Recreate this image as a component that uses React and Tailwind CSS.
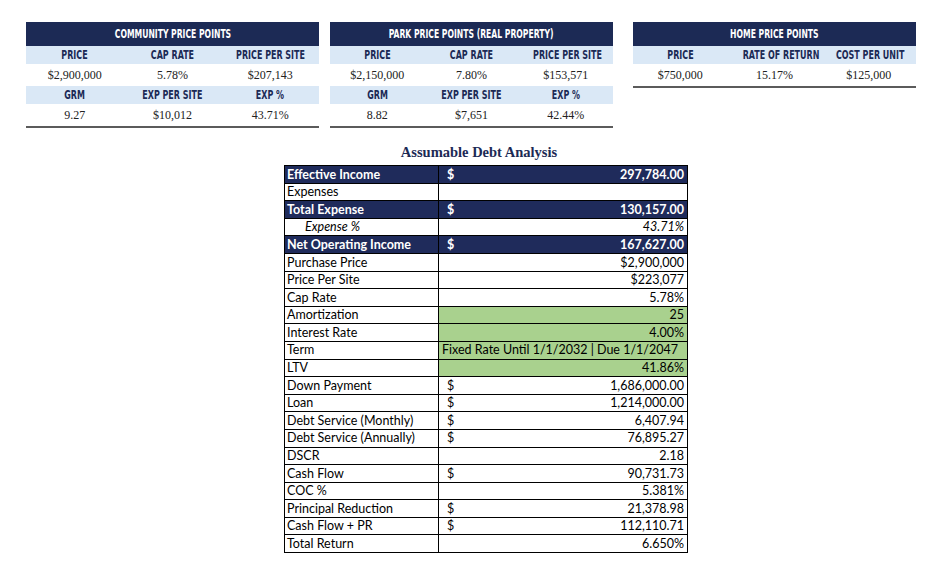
const topTables = [
  {
    title: 'COMMUNITY PRICE POINTS',
    width: 'w-[293px]',
    rows: [
      [['PRICE', 'CAP RATE', 'PRICE PER SITE'], ['$2,900,000', '5.78%', '$207,143']],
      [['GRM', 'EXP PER SITE', 'EXP %'], ['9.27', '$10,012', '43.71%']],
    ],
  },
  {
    title: 'PARK PRICE POINTS (REAL PROPERTY)',
    width: 'w-[283px]',
    rows: [
      [['PRICE', 'CAP RATE', 'PRICE PER SITE'], ['$2,150,000', '7.80%', '$153,571']],
      [['GRM', 'EXP PER SITE', 'EXP %'], ['8.82', '$7,651', '42.44%']],
    ],
  },
  {
    title: 'HOME PRICE POINTS',
    width: 'w-[283px]',
    rows: [[['PRICE', 'RATE OF RETURN', 'COST PER UNIT'], ['$750,000', '15.17%', '$125,000']]],
  },
];

const debtRows = [
  { label: 'Effective Income', dollar: true, value: '297,784.00', kind: 'navy' },
  { label: 'Expenses', value: '' },
  { label: 'Total Expense', dollar: true, value: '130,157.00', kind: 'navy' },
  { label: 'Expense %', value: '43.71%', kind: 'italic' },
  { label: 'Net Operating Income', dollar: true, value: '167,627.00', kind: 'navy' },
  { label: 'Purchase Price', value: '$2,900,000' },
  { label: 'Price Per Site', value: '$223,077' },
  { label: 'Cap Rate', value: '5.78%' },
  { label: 'Amortization', value: '25', kind: 'green' },
  { label: 'Interest Rate', value: '4.00%', kind: 'green' },
  { label: 'Term', value: 'Fixed Rate Until 1/1/2032 | Due 1/1/2047', kind: 'green', left: true },
  { label: 'LTV', value: '41.86%', kind: 'green' },
  { label: 'Down Payment', dollar: true, value: '1,686,000.00' },
  { label: 'Loan', dollar: true, value: '1,214,000.00' },
  { label: 'Debt Service (Monthly)', dollar: true, value: '6,407.94' },
  { label: 'Debt Service (Annually)', dollar: true, value: '76,895.27' },
  { label: 'DSCR', value: '2.18' },
  { label: 'Cash Flow', dollar: true, value: '90,731.73' },
  { label: 'COC %', value: '5.381%' },
  { label: 'Principal Reduction', dollar: true, value: '21,378.98' },
  { label: 'Cash Flow + PR', dollar: true, value: '112,110.71' },
  { label: 'Total Return', value: '6.650%' },
];

// condensed caps, squeezed horizontally to match the narrow heading face
function Cond({ children }) {
  return <span className="inline-block scale-x-[0.71] whitespace-nowrap">{children}</span>;
}

function PriceTable({ t }) {
  return (
    <div className={`${t.width} border-b-2 border-[#5b5b5b]`}>
      <div className="h-[24px] bg-[#1c2a55] text-white flex items-center justify-center text-[12px] font-bold [font-family:'DejaVu_Sans_Condensed','DejaVu_Sans',sans-serif]">
        <Cond>{t.title}</Cond>
      </div>
      {t.rows.map(([heads, vals], i) => (
        <div key={i}>
          <div className="grid grid-cols-3 h-[18px] bg-[#dae8f6] items-center text-center text-[12.5px] font-bold text-[#1c2a55] [font-family:'DejaVu_Sans_Condensed','DejaVu_Sans',sans-serif]">
            {heads.map((h) => <span key={h}><Cond>{h}</Cond></span>)}
          </div>
          <div className="grid grid-cols-3 h-[22px] items-center text-center text-[12px] text-[#222] [font-family:'Liberation_Serif',serif]">
            {vals.map((v) => <span key={v}>{v}</span>)}
          </div>
        </div>
      ))}
    </div>
  );
}

export default function App() {
  return (
    <div className="w-[928px] h-[588px] bg-white pt-[22px] pl-[26px]">
      <div className="flex items-start">
        <PriceTable t={topTables[0]} />
        <div className="ml-[11px]"><PriceTable t={topTables[1]} /></div>
        <div className="ml-[20px]"><PriceTable t={topTables[2]} /></div>
      </div>

      <div className="w-[404px] ml-[258px] mt-[14px]">
        <h2 className="text-center pr-[14px] text-[14.5px] font-bold text-[#1c2a55] h-[23px] leading-[20px] [font-family:'Liberation_Serif',serif]">
          Assumable Debt Analysis
        </h2>
        <table className="w-full border-collapse border border-black text-[12.5px] text-black [font-family:Lato,sans-serif]">
          <tbody>
            {debtRows.map((r) => {
              const navy = r.kind === 'navy';
              const green = r.kind === 'green';
              const italic = r.kind === 'italic';
              return (
                <tr key={r.label} className={`h-[17.6px] leading-none ${navy ? 'bg-[#1f2b5b] text-white font-bold' : ''}`}>
                  <td className={`w-[154px] border border-black px-[2px] pt-[1px] pb-0 whitespace-nowrap ${italic ? 'italic pl-[20px]' : ''}`}>
                    {r.label}
                  </td>
                  <td className={`border border-black px-[3px] pt-[1px] pb-0 whitespace-nowrap ${green ? 'bg-[#a9d18e]' : ''} ${italic ? 'italic' : ''}`}>
                    {r.left ? (
                      <span>{r.value}</span>
                    ) : (
                      <div className="flex justify-between">
                        <span className="pl-[5px]">{r.dollar ? '$' : ''}</span>
                        <span>{r.value}</span>
                      </div>
                    )}
                  </td>
                </tr>
              );
            })}
          </tbody>
        </table>
      </div>
    </div>
  );
}
